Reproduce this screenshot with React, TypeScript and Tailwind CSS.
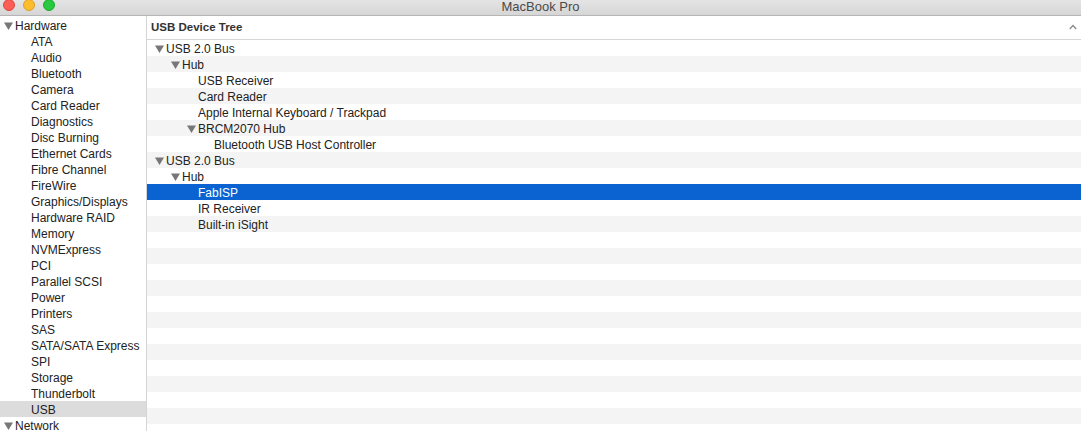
import React from "react";

const sidebarItems = [
  "ATA","Audio","Bluetooth","Camera","Card Reader","Diagnostics","Disc Burning","Ethernet Cards","Fibre Channel","FireWire","Graphics/Displays","Hardware RAID","Memory","NVMExpress","PCI","Parallel SCSI","Power","Printers","SAS","SATA/SATA Express","SPI","Storage","Thunderbolt","USB",
];

type Node = { label: string; level: number; tri?: boolean };
const tree: Node[] = [
  { label: "USB 2.0 Bus", level: 0, tri: true },
  { label: "Hub", level: 1, tri: true },
  { label: "USB Receiver", level: 2 },
  { label: "Card Reader", level: 2 },
  { label: "Apple Internal Keyboard / Trackpad", level: 2 },
  { label: "BRCM2070 Hub", level: 2, tri: true },
  { label: "Bluetooth USB Host Controller", level: 3 },
  { label: "USB 2.0 Bus", level: 0, tri: true },
  { label: "Hub", level: 1, tri: true },
  { label: "FabISP", level: 2 },
  { label: "IR Receiver", level: 2 },
  { label: "Built-in iSight", level: 2 },
];

const Tri = () => (
  <svg width="9" height="8" viewBox="0 0 9 8" className="shrink-0 -mt-[1px]">
    <path d="M0 0.5 L9 0.5 L4.5 8 Z" fill="#777777" />
  </svg>
);

const indentCls = ["pl-[8px]", "pl-[24px]", "pl-[40px]", "pl-[56px]"];

export default function App() {
  const emptyRows = Array.from({ length: 13 });
  return (
    <div
      className="w-[1081px] h-[431px] overflow-hidden bg-white flex flex-col text-[12px] text-[#222222]"
      style={{ fontFamily: '"Liberation Sans", Arial, sans-serif' }}
    >
      {/* title bar */}
      <div className="h-[16px] shrink-0 relative bg-gradient-to-b from-[#e4e4e4] to-[#d6d6d6] border-b border-[#b5b5b5] flex items-center justify-center">
        <div className="absolute left-[3px] top-[-1px] flex gap-[8px]">
          <div className="w-[12px] h-[12px] rounded-full bg-[#fc5f57] border border-[#e0443e]" />
          <div className="w-[12px] h-[12px] rounded-full bg-[#fdbc2e] border border-[#dea123]" />
          <div className="w-[12px] h-[12px] rounded-full bg-[#28c840] border border-[#1aab29]" />
        </div>
        <div className="text-[13px] text-[#4a4a4a] leading-none -mt-[2px]">MacBook Pro</div>
      </div>
      {/* body */}
      <div className="flex flex-1 min-h-0">
        {/* sidebar */}
        <div className="w-[147px] shrink-0 border-r border-[#d4d4d4] pt-[1px] flex flex-col">
          <div className="h-[16px] flex items-center pt-[2px] pl-[4px] gap-[2px]">
            <Tri />
            <span>Hardware</span>
          </div>
          {sidebarItems.map((s) => (
            <div
              key={s}
              className={`h-[16px] flex items-center pt-[2px] pl-[31px] ${s === "USB" ? "bg-[#dcdcdc]" : ""}`}
            >
              {s}
            </div>
          ))}
          <div className="h-[16px] flex items-center pt-[2px] pl-[4px] gap-[2px]">
            <Tri />
            <span>Network</span>
          </div>
        </div>
        {/* content */}
        <div className="flex-1 flex flex-col min-w-0">
          <div className="h-[24px] shrink-0 border-b border-[#d6d6d6] flex items-center justify-between pt-[1px] pl-[4px] pr-[4px]">
            <span className="font-bold text-[11.5px] text-[#333333]">USB Device Tree</span>
            <svg width="8" height="6" viewBox="0 0 8 6" className="mt-[-2px]">
              <path d="M0.8 5 L4 1.5 L7.2 5" stroke="#8a8a8a" strokeWidth="1.3" fill="none" />
            </svg>
          </div>
          {tree.map((n, i) => {
            const sel = n.label === "FabISP";
            const bg = sel ? "bg-[#0b63d1] text-white" : i % 2 === 1 ? "bg-[#f4f4f4]" : "bg-white";
            return (
              <div key={i} className={`h-[16px] shrink-0 flex items-center pt-[2px] ${indentCls[n.level]} ${bg}`}>
                {n.tri ? (
                  <span className="flex items-center gap-[2px]">
                    <Tri />
                    <span>{n.label}</span>
                  </span>
                ) : (
                  <span className="pl-[11px]">{n.label}</span>
                )}
              </div>
            );
          })}
          {emptyRows.map((_, j) => (
            <div
              key={"e" + j}
              className={`h-[16px] shrink-0 ${(tree.length + j) % 2 === 1 ? "bg-[#f4f4f4]" : "bg-white"}`}
            />
          ))}
        </div>
      </div>
    </div>
  );
}
